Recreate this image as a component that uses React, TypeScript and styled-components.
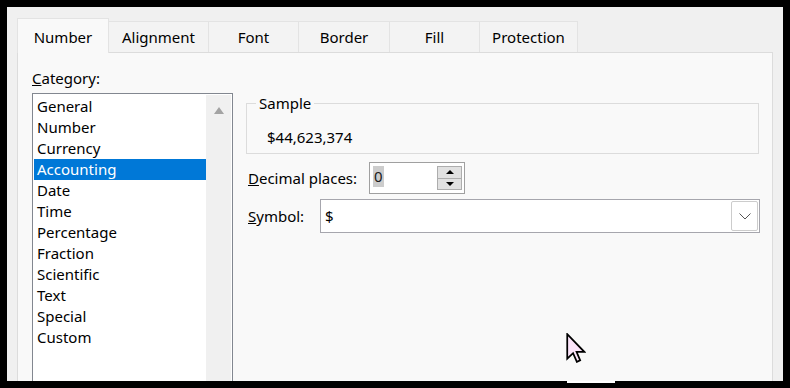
import styled, { createGlobalStyle } from 'styled-components';

const GlobalStyle = createGlobalStyle`
  html, body {
    margin: 0;
    padding: 0;
    background: #000;
  }
  body {
    font-family: 'Noto Sans', 'Open Sans', sans-serif;
    font-size: 15px;
    color: #000;
  }
`;

const tabs = [
  { label: 'Number', width: 92 },
  { label: 'Alignment', width: 101 },
  { label: 'Font', width: 91 },
  { label: 'Border', width: 92 },
  { label: 'Fill', width: 91 },
  { label: 'Protection', width: 99 },
];

const categories = [
  'General',
  'Number',
  'Currency',
  'Accounting',
  'Date',
  'Time',
  'Percentage',
  'Fraction',
  'Scientific',
  'Text',
  'Special',
  'Custom',
];

const App = () => {
  return (
    <Frame>
      <GlobalStyle />
      <Dialog>
        <TabRow>
          {tabs.map((t, i) => (
            <Tab key={t.label} $w={t.width} $active={i === 0}>
              {t.label}
            </Tab>
          ))}
        </TabRow>
        <Panel>
          <LeftCol>
            <FieldLabel>
              <u>C</u>ategory:
            </FieldLabel>
            <ListBox>
              <Items>
                {categories.map((c) => (
                  <Item key={c} $selected={c === 'Accounting'}>
                    {c}
                  </Item>
                ))}
              </Items>
              <ScrollTrack>
                <ScrollUp />
              </ScrollTrack>
            </ListBox>
          </LeftCol>
          <RightCol>
            <SampleBox>
              <Legend>Sample</Legend>
              <SampleValue>$44,623,374</SampleValue>
            </SampleBox>
            <Row $top={8}>
              <RowLabel $w={123}>
                <u>D</u>ecimal places:
              </RowLabel>
              <Spinner>
                <SpinText>
                  <Selection>0</Selection>
                </SpinText>
                <SpinButtons>
                  <SpinBtn>
                    <Arrow $dir="up" />
                  </SpinBtn>
                  <SpinBtn>
                    <Arrow $dir="down" />
                  </SpinBtn>
                </SpinButtons>
              </Spinner>
            </Row>
            <Row $top={5}>
              <RowLabel $w={74}>
                <u>S</u>ymbol:
              </RowLabel>
              <Select>
                <SelectValue>$</SelectValue>
                <DropBtn>
                  <svg width="12" height="7" viewBox="0 0 12 7">
                    <path d="M0.5 0.5 L6 6 L11.5 0.5" fill="none" stroke="#555" strokeWidth="1" />
                  </svg>
                </DropBtn>
              </Select>
            </Row>
          </RightCol>
        </Panel>
      </Dialog>
      <Cursor width="20" height="30" viewBox="0 0 12.5 19">
        <path
          d="M0.7 0.7 L0.7 16.3 L4.4 12.8 L6.8 18.3 L8.9 17.3 L6.6 11.9 L11.5 11.9 Z"
          fill="#fbe4fa"
          stroke="#000"
          strokeWidth="1.1"
          strokeLinejoin="miter"
        />
      </Cursor>
      <Glitch />
    </Frame>
  );
};

export default App;

const Frame = styled.div`
  position: relative;
  width: 790px;
  height: 388px;
  box-sizing: border-box;
  padding: 7px;
  background: #000;
  overflow: hidden;
`;

const Dialog = styled.div`
  width: 776px;
  height: 374px;
  background: #f0f0f0;
  display: flex;
  flex-direction: column;
  overflow: hidden;
`;

const TabRow = styled.div`
  display: flex;
  align-items: flex-end;
  padding: 11px 0 0 10px;
`;

const Tab = styled.div<{ $w: number; $active: boolean }>`
  box-sizing: border-box;
  width: ${(p) => p.$w}px;
  height: ${(p) => (p.$active ? 35 : 31)}px;
  margin-left: -1px;
  margin-bottom: ${(p) => (p.$active ? -1 : 0)}px;
  padding-top: ${(p) => (p.$active ? 2 : 0)}px;
  border: 1px solid #e3e3e3;
  border-bottom: none;
  background: ${(p) => (p.$active ? '#f9f9f9' : '#f3f3f3')};
  position: relative;
  z-index: ${(p) => (p.$active ? 1 : 0)};
  display: flex;
  align-items: center;
  justify-content: center;
  font-size: 15px;

  &:first-child {
    margin-left: 0;
  }
`;

const Panel = styled.div`
  flex: 1;
  margin: 0 10px;
  background: #f9f9f9;
  border: 1px solid #dcdcdc;
  display: flex;
  gap: 13px;
  padding: 15px 13px 0 14px;
`;

const LeftCol = styled.div`
  width: 201px;
  display: flex;
  flex-direction: column;
`;

const FieldLabel = styled.div`
  line-height: 20px;
  margin-bottom: 5px;
`;

const ListBox = styled.div`
  box-sizing: border-box;
  width: 201px;
  height: 300px;
  border: 1px solid #828790;
  background: #fff;
  display: flex;
  padding: 1px;
`;

const Items = styled.div`
  flex: 1;
  padding-top: 1px;
`;

const Item = styled.div<{ $selected: boolean }>`
  height: 21px;
  line-height: 21px;
  padding-left: 3px;
  background: ${(p) => (p.$selected ? '#0078d7' : 'transparent')};
  color: ${(p) => (p.$selected ? '#fff' : '#000')};
`;

const ScrollTrack = styled.div`
  width: 25px;
  background: #f0f0f0;
  display: flex;
  justify-content: center;
  padding-top: 12px;
`;

const ScrollUp = styled.div`
  width: 0;
  height: 0;
  border-left: 5.5px solid transparent;
  border-right: 5.5px solid transparent;
  border-bottom: 7px solid #a3a3a3;
`;

const RightCol = styled.div`
  flex: 1;
  padding-top: 25px;
  display: flex;
  flex-direction: column;
`;

const SampleBox = styled.fieldset`
  margin: 0 1px 0 0;
  padding: 0 0 6px 0;
  border: 1px solid #dcdcdc;
  min-inline-size: 0;
`;

const Legend = styled.legend`
  margin-left: 9px;
  padding: 0 3px;
  line-height: 20px;
  font-size: 15px;
`;

const SampleValue = styled.div`
  margin-top: 14px;
  padding-left: 20px;
  line-height: 20px;
`;

const Row = styled.div<{ $top: number }>`
  display: flex;
  align-items: center;
  margin-top: ${(p) => p.$top}px;
`;

const RowLabel = styled.div<{ $w: number }>`
  box-sizing: border-box;
  width: ${(p) => p.$w}px;
  padding-left: 2px;
  line-height: 20px;
`;

const Spinner = styled.div`
  box-sizing: border-box;
  width: 96px;
  height: 32px;
  border: 1px solid #a0a0a0;
  background: #fff;
  display: flex;
  padding: 3px 2px 3px 3px;
`;

const SpinText = styled.div`
  flex: 1;
`;

const Selection = styled.span`
  display: inline-block;
  height: 21px;
  line-height: 21px;
  padding: 0 1px;
  background: #cccccc;
  color: #1a1a1a;
`;

const SpinButtons = styled.div`
  width: 25px;
  display: flex;
  flex-direction: column;
`;

const SpinBtn = styled.div`
  flex: 1;
  box-sizing: border-box;
  border: 1px solid #adadad;
  background: #e1e1e1;
  display: flex;
  align-items: center;
  justify-content: center;

  & + & {
    border-top: none;
  }
`;

const Arrow = styled.div<{ $dir: 'up' | 'down' }>`
  width: 0;
  height: 0;
  border-left: 4px solid transparent;
  border-right: 4px solid transparent;
  ${(p) => (p.$dir === 'up' ? 'border-bottom: 4px solid #000;' : 'border-top: 4px solid #000;')}
`;

const Select = styled.div`
  box-sizing: border-box;
  width: 440px;
  height: 34px;
  border: 1px solid #a6a6ad;
  background: #fff;
  display: flex;
  align-items: center;
`;

const SelectValue = styled.div`
  flex: 1;
  padding-left: 4px;
  line-height: 20px;
`;

const DropBtn = styled.div`
  box-sizing: border-box;
  width: 27px;
  height: 30px;
  margin-right: 1px;
  border: 1px solid #cccccc;
  border-radius: 2px;
  background: #fff;
  display: flex;
  align-items: center;
  justify-content: center;
`;

const Cursor = styled.svg`
  position: absolute;
  left: 566px;
  top: 333px;
`;

const Glitch = styled.div`
  position: absolute;
  left: 567px;
  top: 381px;
  width: 48px;
  height: 2px;
  background: #fff;
`;
